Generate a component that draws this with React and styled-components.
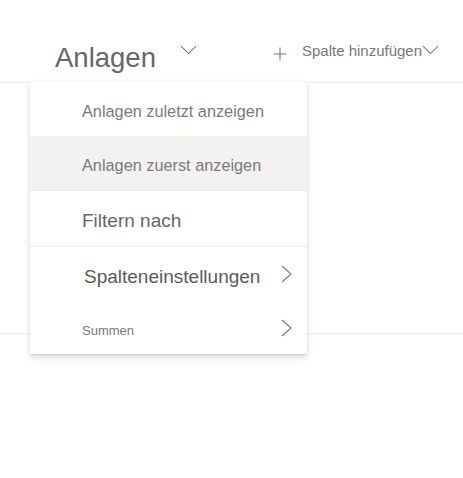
import React from "react";
import styled, { createGlobalStyle } from "styled-components";

const GlobalStyle = createGlobalStyle`
  html, body {
    margin: 0;
    padding: 0;
    background: #ffffff;
    font-family: "Liberation Sans", Arial, sans-serif;
  }
`;

const Page = styled.div`
  position: relative;
  width: 463px;
  height: 478px;
  overflow: hidden;
  background: #fff;
`;

const Header = styled.div`
  display: flex;
  align-items: flex-start;
  height: 82px;
  border-bottom: 1px solid #edebe9;
  box-sizing: content-box;
`;

const Title = styled.div`
  margin: 42px 0 0 55px;
  font-size: 27.5px;
  line-height: 32px;
  color: #666;
`;

const Chevron = styled.svg`
  display: block;
  margin-top: ${({ top }) => top}px;
  margin-left: ${({ left }) => left || 0}px;
  flex: none;
`;

const AddColumn = styled.div`
  display: flex;
  align-items: flex-start;
  margin-left: 76px;
`;

const AddText = styled.span`
  margin: 41px 0 0 15px;
  font-size: 15px;
  line-height: 20px;
  color: #777;
`;

const Body = styled.div`
  height: 250px;
  border-bottom: 1px solid #edebe9;
`;

const Menu = styled.div`
  position: absolute;
  left: 30px;
  top: 82px;
  width: 277px;
  background: #fff;
  border-radius: 2px;
  box-shadow: 0 3.2px 7.2px rgba(0, 0, 0, 0.13), 0 0.6px 1.8px rgba(0, 0, 0, 0.11);
  overflow: hidden;
`;

const Item = styled.div`
  display: flex;
  align-items: center;
  justify-content: space-between;
  height: ${({ h }) => h}px;
  padding: 0 15px 0 ${({ indent }) => indent || 52}px;
  background: ${({ active }) => (active ? "#f3f2f1" : "#fff")};
  border-bottom: ${({ divider }) => (divider ? "1px solid #edebe9" : "none")};
  box-sizing: content-box;
`;

const Label = styled.span`
  margin-top: 5px;
  font-size: ${({ size }) => size}px;
  color: ${({ tone }) => tone};
  white-space: nowrap;
`;

const Down = ({ top, left }) => (
  <Chevron top={top} left={left} width="17" height="10" viewBox="0 0 17 10">
    <path d="M1 1.2 L8.5 8.6 L16 1.2" fill="none" stroke="#777" strokeWidth="1.1" />
  </Chevron>
);

const Plus = () => (
  <Chevron top={47} width="14" height="14" viewBox="0 0 14 14">
    <path d="M7 0.5 V13.5 M0.5 7 H13.5" fill="none" stroke="#777" strokeWidth="1.1" />
  </Chevron>
);

const Right = () => (
  <svg width="11" height="18" viewBox="0 0 11 18" style={{ flex: "none" }}>
    <path d="M1 1 L10 9 L1 17" fill="none" stroke="#777" strokeWidth="1.1" />
  </svg>
);

const items = [
  { label: "Anlagen zuletzt anzeigen", size: 16.3, tone: "#7a7a7a", h: 54 },
  { label: "Anlagen zuerst anzeigen", size: 16.3, tone: "#7a7a7a", h: 54, active: true, divider: true },
  { label: "Filtern nach", size: 19, tone: "#666", h: 55, divider: true },
  { label: "Spalteneinstellungen", size: 19, tone: "#5a5a5a", h: 54, indent: 54, sub: true },
  { label: "Summen", size: 13, tone: "#777", h: 53, sub: true },
];

export default function App() {
  return (
    <Page>
      <GlobalStyle />
      <Header>
        <Title>Anlagen</Title>
        <Down top={45} left={24} />
        <AddColumn>
          <Plus />
          <AddText>Spalte hinzufügen</AddText>
          <Down top={45} />
        </AddColumn>
      </Header>
      <Body />
      <Menu>
        {items.map((it) => (
          <Item key={it.label} h={it.h} active={it.active} divider={it.divider} indent={it.indent}>
            <Label size={it.size} tone={it.tone}>{it.label}</Label>
            {it.sub && <Right />}
          </Item>
        ))}
      </Menu>
    </Page>
  );
}
